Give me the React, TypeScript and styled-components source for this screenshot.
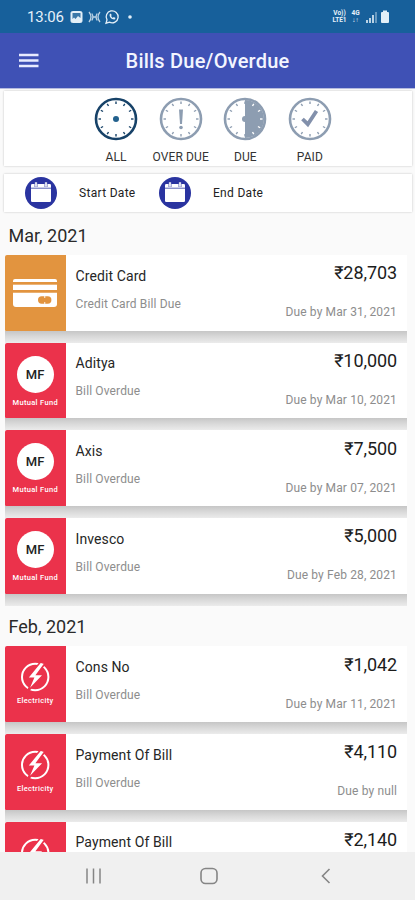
import React from 'react';
import styled, { createGlobalStyle } from 'styled-components';

const GlobalStyle = createGlobalStyle`
  * { box-sizing: border-box; }
  body { margin: 0; background: #fafafa; font-family: Roboto, "Noto Sans", sans-serif; color: #222; }
  svg { display: block; flex: none; }
`;

const Screen = styled.div`
  width: 415px;
  height: 900px;
  display: flex;
  flex-direction: column;
  overflow: hidden;
  background: #fafafa;
`;

const StatusBar = styled.div`
  height: 33px;
  flex: none;
  display: flex;
  align-items: center;
  padding: 0 25px 0 27px;
  background: #17609b;
  color: #e6f1fa;
`;

const Clock = styled.span`
  width: 42px;
  font-size: 15px;
  letter-spacing: -0.1px;
  line-height: 33px;
  padding-top: 2px;
`;

const Spacer = styled.div`
  flex: 1;
`;

const NetworkLabel = styled.div<{ $width: number }>`
  width: ${(p) => p.$width}px;
  font-size: 6.5px;
  font-weight: 700;
  line-height: 6.5px;
  text-align: center;
`;

const AppBar = styled.header`
  height: 56px;
  flex: none;
  display: grid;
  grid-template-columns: 58px 1fr 58px;
  align-items: center;
  background: #3f51b5;
  border-bottom: 1px solid #b5bbdf;
  color: #f3f5ff;
`;

const MenuButton = styled.button`
  border: 0;
  padding: 0 0 0 18px;
  background: none;
`;

const Title = styled.h1`
  margin: 0;
  text-align: center;
  font-size: 20px;
  line-height: 26px;
  font-weight: 500;
  letter-spacing: 0.22px;
  white-space: nowrap;
  padding-top: 1px;
`;

const Panel = styled.section<{ $height: number }>`
  height: ${(p) => p.$height}px;
  flex: none;
  margin: 0 3px 0 4px;
  display: flex;
  background: #fff;
  box-shadow: 0 0 2px rgba(0, 0, 0, 0.22);
`;

const Filters = styled(Panel)`
  margin-top: 2px;
  justify-content: center;
  padding-left: 10px;
`;

const Filter = styled.button`
  width: 64.6px;
  flex: none;
  padding: 6px 0 0;
  border: 0;
  background: none;
  display: flex;
  flex-direction: column;
  align-items: center;
  gap: 9px;
  font: 400 12px/14px Roboto, sans-serif;
  letter-spacing: 0.1px;
  color: #333;
  white-space: nowrap;
`;

const Dates = styled(Panel)`
  margin-top: 8px;
  align-items: center;
  padding-left: 20.5px;
`;

const DateField = styled.div<{ $width: number }>`
  width: ${(p) => p.$width}px;
  flex: none;
  display: flex;
  align-items: center;
  gap: 22.5px;
  font-size: 12px;
  letter-spacing: 0.3px;
  color: #222;
`;

const Bills = styled.main`
  flex: 1;
  min-height: 0;
  overflow: hidden;
  padding: 0 8px 0 5px;
`;

const Month = styled.h2<{ $height: number }>`
  margin: 0;
  height: ${(p) => p.$height}px;
  padding: 0 0 7px 3.5px;
  display: flex;
  align-items: flex-end;
  font-size: 18px;
  line-height: 24px;
  font-weight: 400;
  color: #2a2a2a;
`;

const Bill = styled.article`
  height: 87.7px;
  display: flex;
  flex-direction: column;
  &::after {
    content: '';
    flex: 1;
    background: linear-gradient(#c6c6c6, #d8d8d8 45%, #ebebeb);
  }
`;

const BillBody = styled.div`
  height: 75.8px;
  flex: none;
  display: grid;
  grid-template-columns: 60.5px 1fr auto;
  background: #fff;
`;

const Tile = styled.div<{ $color: string }>`
  background: ${(p) => p.$color};
  border-radius: 2px 0 0 1px;
  display: flex;
  flex-direction: column;
  align-items: center;
  color: #fff;
`;

const CardArt = styled.svg`
  margin-top: 23px;
`;

const FundBadge = styled.div`
  width: 37px;
  height: 37px;
  margin-top: 13px;
  border-radius: 50%;
  background: #fff;
  color: #222;
  font-size: 13px;
  font-weight: 500;
  letter-spacing: 0.2px;
  line-height: 38px;
  text-align: center;
`;

const BoltArt = styled.svg`
  margin-top: 14px;
`;

const TileLabel = styled.span<{ $gap: number }>`
  margin-top: ${(p) => p.$gap}px;
  font-size: 7.5px;
  line-height: 10px;
  font-weight: 500;
  letter-spacing: 0.32px;
  white-space: nowrap;
`;

const Details = styled.div`
  padding: 11.5px 0 0 10px;
  display: flex;
  flex-direction: column;
  gap: 12px;
`;

const Name = styled.span`
  font-size: 14px;
  line-height: 18px;
  letter-spacing: 0.1px;
  color: #262626;
`;

const Note = styled.span`
  font-size: 12px;
  line-height: 15px;
  letter-spacing: 0.13px;
  color: #8d8d8d;
`;

const Charges = styled.div`
  padding: 7.4px 10px 0 0;
  display: flex;
  flex-direction: column;
  align-items: flex-end;
  gap: 21px;
`;

const Amount = styled.span`
  font-size: 18px;
  line-height: 22px;
  letter-spacing: -0.08px;
  color: #1c1c1c;
`;

const NavBar = styled.nav`
  height: 48px;
  flex: none;
  display: grid;
  grid-template-columns: 151px 1fr 148px;
  align-items: center;
  background: #f0f0f0;
`;

const NavItem = styled.div<{ $offset: number }>`
  padding-left: ${(p) => p.$offset}px;
`;

type ClockKind = 'all' | 'over' | 'due' | 'paid';

const ticks = [0, 30, 60, 90, 120, 150, 180, 210, 240, 270, 300, 330];

function ClockIcon({ kind }: { kind: ClockKind }) {
  const color = kind === 'all' ? '#174268' : '#8d9db1';
  return (
    <svg width="44" height="44" viewBox="-22 -22 44 44" fill="none" stroke={color}>
      <circle r="20" strokeWidth="2.6" fill="#fff" />
      {kind === 'due' && <path d="M0-19A19 19 0 0 1 0 19Z" fill={color} stroke="none" />}
      {ticks.map((a) => (
        <path
          key={a}
          d="M0-17.5V-15"
          strokeWidth="1.4"
          stroke={kind === 'due' && a > 0 && a < 180 ? '#fff' : color}
          transform={`rotate(${a})`}
        />
      ))}
      {kind === 'all' && <circle r="3" fill="#23618d" stroke="none" />}
      {kind === 'due' && <circle r="3" fill={color} stroke="none" />}
      {kind === 'over' && (
        <>
          <path d="M-2-9.5H2L1 5H-1Z" fill={color} stroke="none" />
          <circle cy="8.5" r="1.8" fill={color} stroke="none" />
        </>
      )}
      {kind === 'paid' && <path d="M-7.5 0L-2.2 5.2L6.5-8" stroke="#8290ab" strokeWidth="3.8" />}
    </svg>
  );
}

function CalendarIcon() {
  return (
    <svg width="32" height="32" viewBox="0 0 32 32">
      <circle cx="16" cy="16" r="16" fill="#2a34a0" />
      <rect x="6" y="7" width="20" height="18" rx="1.3" fill="#fff" />
      <path d="M6 11.2H26" stroke="#5961b4" strokeWidth="1" />
      <path d="M11 5.2V10M21 5.2V10" stroke="#5961b4" strokeWidth="3" />
      <path d="M11 5.2V9.7M21 5.2V9.7" stroke="#fff" strokeWidth="1.6" />
    </svg>
  );
}

function CreditCardArt() {
  return (
    <CardArt width="46" height="30" viewBox="0 0 46 30" fill="#fff">
      <path d="M1 4V3Q1 1 3 1H43Q45 1 45 3V4Z" />
      <rect x="1" y="6.7" width="44" height="5.3" />
      <path d="M1 14.8H45V26Q45 29 42 29H4Q1 29 1 26Z" />
      <rect x="26" y="18.3" width="13.4" height="7.4" rx="3.7" fill="#e2943f" />
      <path d="M32.7 18.3V19.8M32.7 24.2V25.7" stroke="#fff" strokeWidth="1.2" />
    </CardArt>
  );
}

function ElectricityArt() {
  return (
    <BoltArt width="32" height="34" viewBox="0 0 32 34">
      <circle cx="16.2" cy="17" r="13.2" fill="none" stroke="#fff" strokeWidth="2" />
      <path d="M21.5 2L8.2 18.2H14.2L8.5 31.6L25 14.4H18L26 3.6Z" fill="#fff" stroke="#eb324b" strokeWidth="1.6" />
    </BoltArt>
  );
}

type BillKind = 'card' | 'fund' | 'power';
type BillData = { kind: BillKind; name: string; note: string; amount: string; due: string };

const march: BillData[] = [
  { kind: 'card', name: 'Credit Card', note: 'Credit Card Bill Due', amount: '₹28,703', due: 'Due by Mar 31, 2021' },
  { kind: 'fund', name: 'Aditya', note: 'Bill Overdue', amount: '₹10,000', due: 'Due by Mar 10, 2021' },
  { kind: 'fund', name: 'Axis', note: 'Bill Overdue', amount: '₹7,500', due: 'Due by Mar 07, 2021' },
  { kind: 'fund', name: 'Invesco', note: 'Bill Overdue', amount: '₹5,000', due: 'Due by Feb 28, 2021' },
];

const february: BillData[] = [
  { kind: 'power', name: 'Cons No', note: 'Bill Overdue', amount: '₹1,042', due: 'Due by Mar 11, 2021' },
  { kind: 'power', name: 'Payment Of Bill', note: 'Bill Overdue', amount: '₹4,110', due: 'Due by null' },
];

// The last row is only partly in view, above the navigation bar.
const partial = { name: 'Payment Of Bill', amount: '₹2,140' };

const filters: { kind: ClockKind; label: string }[] = [
  { kind: 'all', label: 'ALL' },
  { kind: 'over', label: 'OVER DUE' },
  { kind: 'due', label: 'DUE' },
  { kind: 'paid', label: 'PAID' },
];

function BillRow({ bill }: { bill: BillData }) {
  return (
    <Bill>
      <BillBody>
        <Tile $color={bill.kind === 'card' ? '#e2943f' : '#eb324b'}>
          {bill.kind === 'card' && <CreditCardArt />}
          {bill.kind === 'fund' && (
            <>
              <FundBadge>MF</FundBadge>
              <TileLabel $gap={5}>Mutual Fund</TileLabel>
            </>
          )}
          {bill.kind === 'power' && (
            <>
              <ElectricityArt />
              <TileLabel $gap={2}>Electricity</TileLabel>
            </>
          )}
        </Tile>
        <Details>
          <Name>{bill.name}</Name>
          <Note>{bill.note}</Note>
        </Details>
        <Charges>
          <Amount>{bill.amount}</Amount>
          <Note>{bill.due}</Note>
        </Charges>
      </BillBody>
    </Bill>
  );
}

function StatusIcons() {
  return (
    <svg width="66" height="16" viewBox="0 0 66 16" fill="none" stroke="#e3eff8">
      <rect x="2" y="2.5" width="11" height="11" rx="1.5" fill="#e3eff8" />
      <path d="M3.5 4H11.5V9L9 7L6.5 10L5 8.5L3.5 10Z" fill="#3b78a9" stroke="none" />
      <path d="M20 3Q24 8 20 13M31 3Q27 8 31 13M22.8 4.5Q25 8 22.8 11.5M28.2 4.5Q26 8 28.2 11.5M24 8H27" strokeWidth="1.3" opacity=".8" />
      <path d="M37 14.2L38 10.9A6 6 0 1 1 40.5 13.2Z" strokeWidth="1.3" />
      <path d="M40.7 5.3C39.8 7.7 43 11 45.6 10.5L46.6 9.1L44.7 8.1L43.8 8.9L42 7L42.7 6.2L41.9 4.6Z" fill="#e3eff8" stroke="none" />
      <circle cx="61" cy="8" r="1.8" fill="#e3eff8" stroke="none" />
    </svg>
  );
}

export default function App() {
  return (
    <>
      <GlobalStyle />
      <Screen>
        <StatusBar>
          <Clock>13:06</Clock>
          <StatusIcons />
          <Spacer />
          <NetworkLabel $width={17}>Vo)) LTE1</NetworkLabel>
          <NetworkLabel $width={15}>4G ↓↑</NetworkLabel>
          <svg width="27" height="16" viewBox="0 0 27 16" fill="#e3eff8">
            <path d="M3 11H5V14H3ZM6 9H8V14H6ZM9 6H11V14H9Z" opacity=".8" />
            <path d="M12 3H14V14H12Z" opacity=".4" />
            <path d="M18 4Q18 3 19 3H20V1.5H24V3H25Q26 3 26 4V13Q26 14 25 14H19Q18 14 18 13Z" />
          </svg>
        </StatusBar>
        <AppBar>
          <MenuButton aria-label="Menu">
            <svg width="21" height="16" viewBox="0 0 21 16" stroke="#e8ebff" strokeWidth="2.3">
              <path d="M1 2H20.5M1 7.5H20.5M1 13H20.5" />
            </svg>
          </MenuButton>
          <Title>Bills Due/Overdue</Title>
        </AppBar>
        <Filters $height={75}>
          {filters.map((f) => (
            <Filter key={f.kind}>
              <ClockIcon kind={f.kind} />
              {f.label}
            </Filter>
          ))}
        </Filters>
        <Dates $height={38}>
          <DateField $width={134}>
            <CalendarIcon />
            Start Date
          </DateField>
          <DateField $width={134}>
            <CalendarIcon />
            End Date
          </DateField>
        </Dates>
        <Bills>
          <Month $height={43}>Mar, 2021</Month>
          {march.map((b) => (
            <BillRow key={b.name} bill={b} />
          ))}
          <Month $height={40.6}>Feb, 2021</Month>
          {february.map((b) => (
            <BillRow key={b.name} bill={b} />
          ))}
          <BillBody>
            <Tile $color="#eb324b">
              <ElectricityArt />
            </Tile>
            <Details>
              <Name>{partial.name}</Name>
            </Details>
            <Charges>
              <Amount>{partial.amount}</Amount>
            </Charges>
          </BillBody>
        </Bills>
        <NavBar>
          <NavItem $offset={85}>
            <svg width="17" height="16" viewBox="0 0 17 16" stroke="#858585" strokeWidth="1.5">
              <path d="M2 .5V15.5M8.5 .5V15.5M15 .5V15.5" />
            </svg>
          </NavItem>
          <NavItem $offset={49}>
            <svg width="18" height="18" viewBox="0 0 18 18" fill="none" stroke="#858585" strokeWidth="1.6">
              <rect x="1" y="1.5" width="16" height="15" rx="4.5" />
            </svg>
          </NavItem>
          <NavItem $offset={53}>
            <svg width="12" height="18" viewBox="0 0 12 18" fill="none" stroke="#858585" strokeWidth="1.6">
              <path d="M9.5 2L2.5 9L9.5 16" />
            </svg>
          </NavItem>
        </NavBar>
      </Screen>
    </>
  );
}
